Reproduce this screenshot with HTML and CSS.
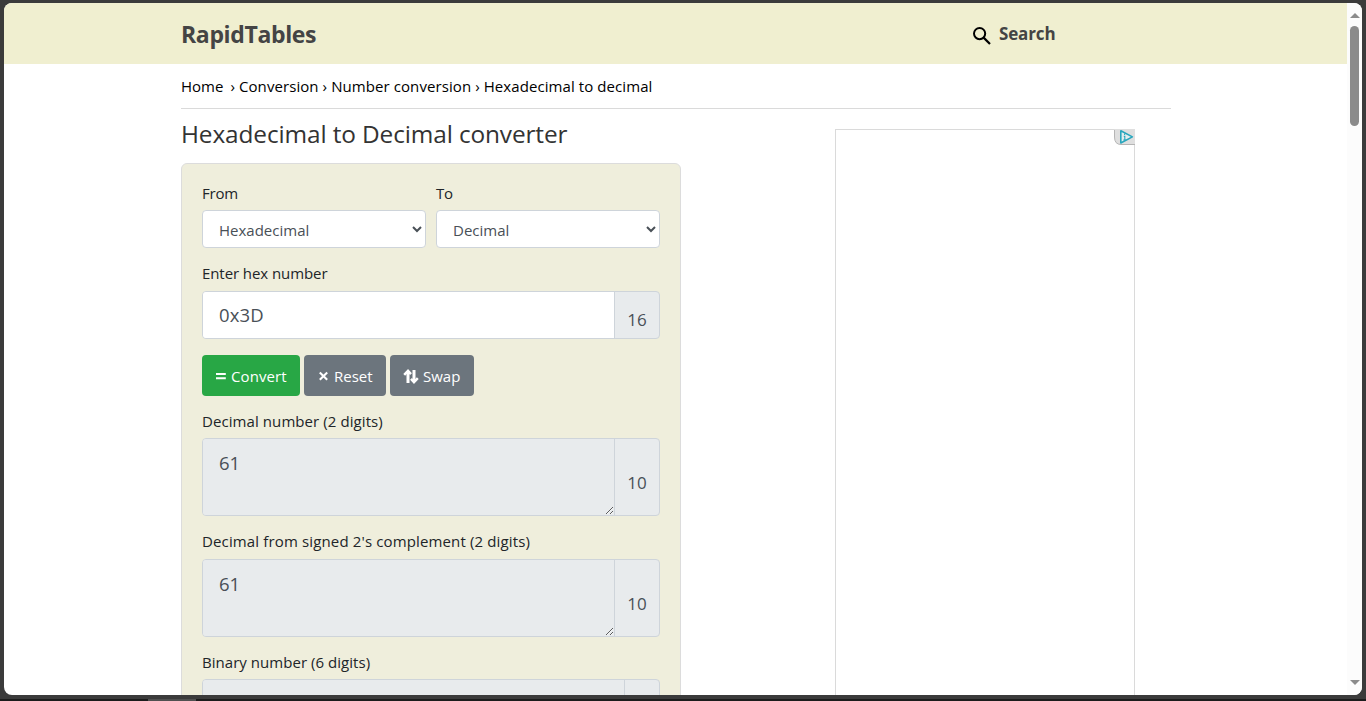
FILE: index.html
```
<!DOCTYPE html>
<html lang="en">
<head>
<meta charset="utf-8">
<title>Hexadecimal to Decimal converter</title>
<link rel="stylesheet" href="styles.css">
</head>
<body>
<div class="window">
  <div class="page">
    <header class="header">
      <div class="container header-row">
        <a class="brand">RapidTables</a>
        <a class="search">
          <svg class="search-icon" width="18" height="18" viewBox="0 0 18 18" fill="none" stroke="#000" stroke-width="2"><circle cx="6.6" cy="6.6" r="5.6"/><path d="M10.6 10.6L17 17" stroke-width="2.2"/></svg>
          <span>Search</span>
        </a>
      </div>
    </header>
    <div class="container">
      <nav class="crumbs"><a class="home">Home</a><span class="trail">› Conversion › Number conversion › Hexadecimal to decimal</span></nav>
      <div class="columns">
        <main class="main">
          <h1 class="title">Hexadecimal to Decimal converter</h1>
          <form class="card">
            <div class="pair">
              <div class="field"><label class="label label-short">From</label><select class="select"><option>Hexadecimal</option></select></div>
              <div class="field"><label class="label label-short">To</label><select class="select"><option>Decimal</option></select></div>
            </div>
            <label class="label label-enter">Enter hex number</label>
            <div class="group group-input"><input class="control" value="0x3D"><span class="addon">16</span></div>
            <div class="buttons">
              <button type="button" class="btn btn-convert"><svg class="btn-icon" width="11" height="14" viewBox="0 0 11 14"><path d="M1 4h9.8v2.1H1zM1 8.2h9.8v2.1H1z" fill="#fff"/></svg><span>Convert</span></button>
              <button type="button" class="btn btn-reset"><svg class="btn-icon" width="12" height="14" viewBox="0 0 12 14"><path d="M2.8 3.6l7.4 7.2M10.2 3.6l-7.4 7.2" stroke="#fff" stroke-width="2.1"/></svg><span>Reset</span></button>
              <button type="button" class="btn btn-swap"><svg class="btn-icon" width="16" height="15" viewBox="0 0 16 15" fill="none" stroke="#fff"><path d="M5 14V2.5M11 1v11.5" stroke-width="3"/><path d="M1.2 5.9L5 1.9L8 5.2M8 9.8l3 3.3L14.8 9.1" stroke-width="2.5"/></svg><span>Swap</span></button>
            </div>
            <label class="label label-decimal">Decimal number (2 digits)</label>
            <div class="group group-area"><textarea class="control" readonly>61</textarea><span class="addon">10</span></div>
            <label class="label label-signed">Decimal from signed 2's complement (2 digits)</label>
            <div class="group group-area group-signed"><textarea class="control" readonly>61</textarea><span class="addon">10</span></div>
            <label class="label label-binary">Binary number (6 digits)</label>
            <div class="group group-area group-binary"><textarea class="control" readonly></textarea><span class="addon"></span></div>
          </form>
        </main>
        <aside class="ad">
          <svg class="ad-badge" width="22" height="17" viewBox="0 0 22 17"><path d="M1.5 0V8Q1.5 15.5 8 15.5H22V0Z" fill="#dfdfdf"/><path d="M1.5 1V8Q1.5 15.5 8 15.5H22" fill="none" stroke="#b5b5b5"/><path d="M7.8 1.8V14L19.4 7.9Z" fill="#e3eced" stroke="#29a6bd" stroke-width="1.6" stroke-linejoin="round"/><path d="M11.6 4.6v1.3M10.8 7.4h1v3.6M10.3 11h2.8" fill="none" stroke="#29a6bd" stroke-width="1.1"/></svg>
        </aside>
      </div>
    </div>
  </div>
  <div class="scrollbar">
    <svg class="arrow" width="10" height="5" viewBox="0 0 10 5"><path d="M0 5L5 0L10 5Z" fill="#8b8b8b"/></svg>
    <div class="thumb"></div>
    <svg class="arrow arrow-down" width="10" height="5" viewBox="0 0 10 5"><path d="M0 0L5 5L10 0Z" fill="#8b8b8b"/></svg>
  </div>
</div>
<div class="taskbar"><div class="taskbar-item"></div></div>
</body>
</html>
```
FILE: styles.css
```
* { box-sizing: border-box; }
body {
  margin: 0; height: 701px; overflow: hidden;
  display: flex; flex-direction: column;
  padding-top: 3px; background: #3b3b3b;
  font: 15px/24px "Open Sans", sans-serif; color: #212529;
}
.window { flex: none; display: flex; height: 692px; margin: 0 4px; border-radius: 8px; overflow: hidden; background: #fff; }
.page { flex: 1; height: 692px; overflow: hidden; }
.container { width: 990px; margin-left: 177px; }
.header { height: 61px; background: #f0efd0; }
.header-row { display: flex; height: 61px; align-items: center; color: #444; font-weight: 700; }
.brand { width: 792px; font-size: 23px; letter-spacing: -.35px; }
.search { display: flex; align-items: center; gap: 8px; font-size: 17px; letter-spacing: -.15px; }
.search-icon { margin-top: 4px; }
.crumbs { display: flex; height: 45px; padding-top: 10px; border-bottom: 1px solid #dadada; color: #000; white-space: nowrap; }
.home { margin-right: 7px; }
.trail { letter-spacing: .08px; }
.columns { display: flex; gap: 154px; }
.main { width: 500px; }
.title { margin: 0; height: 54px; padding-top: 9px; font-size: 24.4px; line-height: 32px; font-weight: 400; letter-spacing: -.12px; color: #333; white-space: nowrap; }
.card { height: 640px; padding: 17px 20px; border: 1px solid #dcdcdc; border-radius: 6px; background: #efeedc; }
.pair { display: flex; gap: 10px; }
.field { flex: 1; }
.label { display: block; height: 24px; white-space: nowrap; }
.label-short { letter-spacing: -.2px; }
.select {
  display: block; width: 224px; height: 38px; margin-top: 5px; padding: 2px 0 0 12px;
  border: 1px solid #ced4da; border-radius: 4px; background: #fff;
  font: 15px/24px "Open Sans", sans-serif; color: #495057;
}
.label-enter { margin-top: 13px; letter-spacing: -.08px; }
.group { display: flex; margin-top: 6px; border: 1px solid #ced4da; border-radius: 4px; background: #e8ebed; overflow: hidden; }
.group-input { height: 48px; }
.group-area { height: 78px; margin-top: 5px; }
.group-signed { margin-top: 6px; }
.control {
  flex: 1; min-width: 0; height: 100%; margin: 0; padding: 9px 16px; border: 0; outline: 0;
  background: #e8ebed; color: #495057; font: 18.5px/30px "Open Sans", sans-serif; resize: both;
}
.group-input .control { background: #fff; padding: 8px 16px 10px; letter-spacing: .15px; }
.addon { width: 45px; padding-top: 13px; border-left: 1px solid #ced4da; text-align: center; font-size: 17px; line-height: 30px; color: #495057; }
.group-area .addon { padding-top: 29px; }
.group-binary .addon { width: 35px; }
.buttons { display: flex; gap: 4px; margin-top: 16px; }
.btn {
  display: flex; align-items: center; height: 41px; padding: 1px 0 0 13px; gap: 5px;
  border: 0; border-radius: 4px; background: #6c757d; color: #fff;
  font: 15px/24px "Open Sans", sans-serif; white-space: nowrap;
}
.btn-convert { width: 98px; background: #28a745; letter-spacing: .1px; }
.btn-reset { width: 82px; }
.btn-swap { width: 84px; gap: 4px; }
.label-decimal { margin-top: 13px; letter-spacing: .08px; }
.label-signed, .label-binary { margin-top: 13px; }
.label-signed { letter-spacing: .14px; }
.label-binary { letter-spacing: .04px; }
.ad { display: flex; justify-content: flex-end; width: 300px; height: 600px; margin-top: 20px; border: 1px solid #dadada; }
.ad-badge { margin: -1px -1px 0 0; }
.scrollbar { display: flex; flex-direction: column; align-items: center; width: 15px; background: #fcfcfc; padding-top: 10px; }
.thumb { width: 9px; height: 100px; margin-top: 8px; border-radius: 5px; background: #8b8b8b; }
.arrow { flex: none; }
.arrow-down { margin: auto 0 10px; }
.taskbar { flex: none; height: 2px; margin-top: 4px; background: #1c1c1c; }
.taskbar-item { width: 48px; height: 2px; margin-left: 148px; background: #505050; }
```
